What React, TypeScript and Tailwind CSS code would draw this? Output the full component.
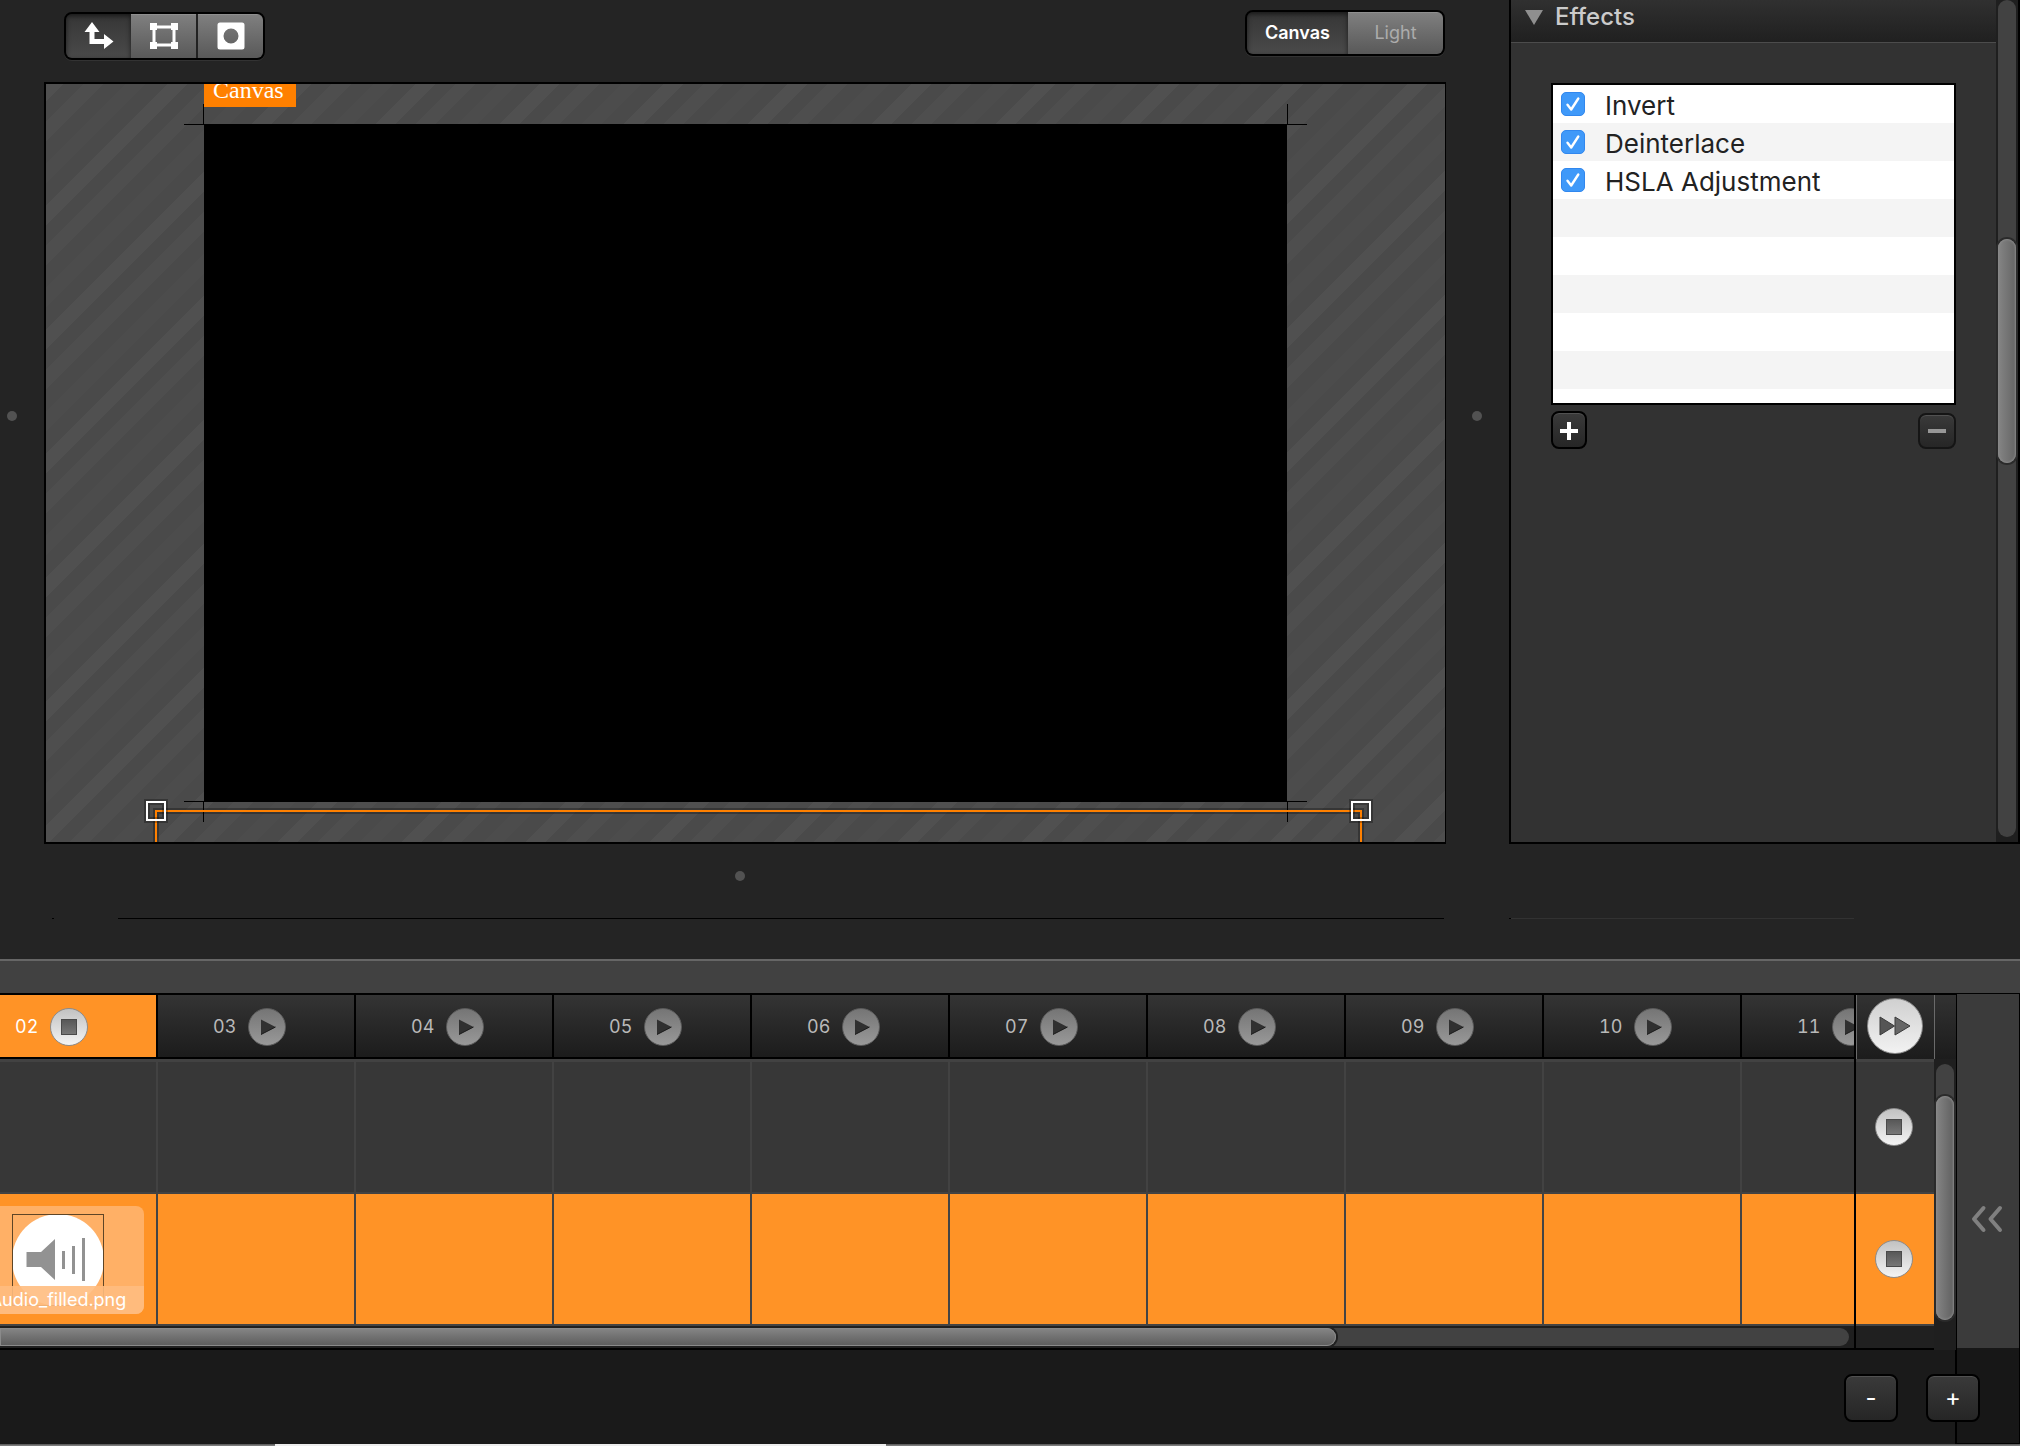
import { useState } from "react";
import type { ReactNode } from "react";

const effects = ["Invert", "Deinterlace", "HSLA Adjustment"];
const blankRows = ["r4", "r5", "r6", "r7", "r8", "r9"];
const columns = ["02", "03", "04", "05", "06", "07", "08", "09", "10", "11"];

const segBase = "flex items-center justify-center";
const segOn =
  "bg-linear-to-b from-[#363636] to-[#4a4a4a] shadow-[inset_0_2px_5px_rgba(0,0,0,0.6)]";
const segOff =
  "bg-linear-to-b from-[#808080] to-[#595959] shadow-[inset_0_1px_0_rgba(255,255,255,0.12)]";
const darkButton =
  "flex items-center justify-center border-2 bg-linear-to-b from-[#3a3a3a] to-[#262626] shadow-[inset_0_1px_0_rgba(255,255,255,0.12)]";

function MoveIcon() {
  return (
    <svg width="30" height="28" viewBox="0 0 30 28" fill="#fff" aria-hidden="true">
      <path d="M8 0 L15.500 10 H10.500 V17 H20 V12 L29.500 19.500 L20 27 V22 H5.500 V10 H0.500 Z" />
    </svg>
  );
}

function FrameIcon() {
  return (
    <svg width="28" height="26" viewBox="0 0 28 26" aria-hidden="true">
      <rect x="4" y="4" width="20" height="18" fill="none" stroke="#fff" strokeWidth="3" />
      <g fill="#fff">
        <rect x="0" y="0" width="7" height="7" />
        <rect x="21" y="0" width="7" height="7" />
        <rect x="0" y="19" width="7" height="7" />
        <rect x="21" y="19" width="7" height="7" />
      </g>
    </svg>
  );
}

function MaskIcon() {
  return (
    <svg width="28" height="28" viewBox="0 0 28 28" aria-hidden="true">
      <path
        fill="#fff"
        fillRule="evenodd"
        d="M3 0.500 H25 A2.500 2.500 0 0 1 27.500 3 V25 A2.500 2.500 0 0 1 25 27.500 H3 A2.500 2.500 0 0 1 0.500 25 V3 A2.500 2.500 0 0 1 3 0.500 Z M14 6.500 A7.500 7.500 0 1 0 14 21.500 A7.500 7.500 0 1 0 14 6.500 Z"
      />
    </svg>
  );
}

function StopButton({ label }: { label: string }) {
  return (
    <button
      aria-label={label}
      className="flex size-[38px] shrink-0 items-center justify-center rounded-full border border-[#8c8c8c] bg-linear-to-b from-[#c2c2c2] to-[#f4f4f4]"
    >
      <span className="size-4 border border-[#4a4a4a] bg-linear-to-b from-[#585858] to-[#777777]" />
    </button>
  );
}

function PlayButton({ label }: { label: string }) {
  return (
    <button
      aria-label={label}
      className="flex size-[38px] shrink-0 items-center justify-center rounded-full border border-[#5c5c5c] bg-linear-to-b from-[#757575] to-[#999999]"
    >
      <svg width="18" height="16" viewBox="0 0 18 16" aria-hidden="true">
        <path d="M3 0.500 L17.500 8 L3 15.500 Z" fill="#303030" />
        <path d="M3 15.500 L17.500 8" stroke="#1a1a1a" fill="none" />
      </svg>
    </button>
  );
}

function Dot() {
  return <span className="block size-2.5 shrink-0 rounded-full bg-[#525252]" />;
}

function Handle({ className }: { className: string }) {
  return (
    <span
      className={
        "absolute size-5 border-2 border-white shadow-[0_0_0_2px_rgba(0,0,0,0.28),inset_0_0_0_2px_rgba(0,0,0,0.28)] " +
        className
      }
    />
  );
}

function Stage() {
  return (
    <div className="relative min-h-80 flex-1 overflow-hidden border-2 border-r border-black bg-[repeating-linear-gradient(135deg,#505050_0%_7%,#4a4a4a_7%_15%,#4e4e4e_15%_23%,#4a4a4a_23%_32%,#4c4c4c_32%_40%,#4a4a4a_40%_49%,#505050_49%_50%)] bg-size-[124px_124px]">
      <div className="absolute inset-x-[158px] inset-y-10 bg-black">
        <span className="absolute -top-5 -left-px h-5 w-px bg-black" />
        <span className="absolute top-0 right-full h-px w-5 bg-black" />
        <span className="absolute -top-5 left-full h-5 w-px bg-black" />
        <span className="absolute top-0 left-full h-px w-5 bg-black" />
        <span className="absolute top-full -left-px h-5 w-px bg-black" />
        <span className="absolute right-full bottom-0 h-px w-5 bg-black" />
        <span className="absolute top-full left-full h-5 w-px bg-black" />
        <span className="absolute bottom-0 left-full h-px w-5 bg-black" />
      </div>
      <div className="absolute top-0 left-[158px] flex h-[23px] w-[92px] items-end bg-[#ff8000] pb-[5px] pl-[9px] font-['Liberation_Serif',serif] text-2xl leading-6 text-white">
        Canvas
      </div>
      <div className="absolute right-[83px] -bottom-2 left-[109px] h-10 border-2 border-[#ff8000] shadow-[0_0_0_2px_rgba(0,0,0,0.28),inset_0_0_0_2px_rgba(0,0,0,0.28)]">
        <Handle className="-top-[11px] -left-[11px]" />
        <Handle className="-top-[11px] -right-[11px]" />
      </div>
    </div>
  );
}

function Segmented({ children }: { children: ReactNode }) {
  return (
    <div className="flex overflow-hidden rounded-lg border-2 border-black bg-black shadow-[0_1px_0_#333]">
      {children}
    </div>
  );
}

function Toolbar() {
  const [tool, setTool] = useState(0);
  const [mode, setMode] = useState(0);
  const tools = [
    { name: "Move", icon: <MoveIcon /> },
    { name: "Transform", icon: <FrameIcon /> },
    { name: "Mask", icon: <MaskIcon /> },
  ];
  return (
    <div className="flex h-[82px] shrink-0 items-start justify-between pt-2.5 pr-px pl-5">
      <div className="pt-0.5">
        <Segmented>
          {tools.map((t, i) => (
            <button
              key={t.name}
              aria-label={t.name}
              aria-pressed={tool === i}
              onClick={() => setTool(i)}
              className={`${segBase} h-11 ${i === 2 ? "w-[67px] border-l-2 border-[#222]" : "w-[65px]"} ${tool === i ? segOn : segOff}`}
            >
              {t.icon}
            </button>
          ))}
        </Segmented>
      </div>
      <Segmented>
        {["Canvas", "Light"].map((m, i) => (
          <button
            key={m}
            aria-pressed={mode === i}
            onClick={() => setMode(i)}
            className={`${segBase} h-[42px] text-lg ${i === 0 ? "w-[101px]" : "w-[95px]"} ${mode === i ? "font-semibold text-white " + segOn : "text-[#acacac] " + segOff}`}
          >
            {m}
          </button>
        ))}
      </Segmented>
    </div>
  );
}

function EffectRow({ name, shaded }: { name: string; shaded: boolean }) {
  const [on, setOn] = useState(true);
  return (
    <li className={shaded ? "bg-[#f4f4f4]" : "bg-white"}>
      <label className="flex h-[38px] items-center gap-5 pl-2 text-[26px] text-[#222]">
        <span className="relative size-6 shrink-0">
          <input
            type="checkbox"
            checked={on}
            onChange={() => setOn(!on)}
            className="block size-6 appearance-none rounded-[5px] border border-[#3187ee] bg-[#3f99f9]"
          />
          {on && (
            <svg
              className="pointer-events-none absolute inset-0"
              width="24"
              height="24"
              viewBox="0 0 24 24"
              fill="none"
              stroke="#fff"
              strokeWidth="2.400"
              strokeLinecap="round"
              strokeLinejoin="round"
              aria-hidden="true"
            >
              <path d="M6.500 12.800 L10.200 17.500 L17.300 6.500" />
            </svg>
          )}
        </span>
        <span className="pt-1 leading-8">{name}</span>
      </label>
    </li>
  );
}

function Inspector() {
  return (
    <aside className="flex w-[511px] shrink-0 border-x-2 border-b-2 border-black bg-[#323232]">
      <div className="min-w-0 flex-1">
        <button className="flex h-[43px] w-full items-start gap-3 border-b border-[#4c4c4c] bg-linear-to-b from-[#303030] to-[#202020] pl-3.5 text-2xl leading-[34px] font-medium text-[#cbcbcb]">
          <svg className="mt-2.5" width="18" height="15" viewBox="0 0 18 15" aria-hidden="true">
            <path d="M0 0 H18 L9 15 Z" fill="#8f8f8f" />
          </svg>
          Effects
        </button>
        <div className="px-10 pt-10">
          <ul className="h-[322px] overflow-hidden border-2 border-black bg-white">
            {effects.map((name, i) => (
              <EffectRow key={name} name={name} shaded={i % 2 === 1} />
            ))}
            {blankRows.map((id, i) => (
              <li key={id} className={`h-[38px] ${i % 2 === 0 ? "bg-[#f4f4f4]" : "bg-white"}`} />
            ))}
          </ul>
          <div className="mt-1.5 flex items-end justify-between">
            <button
              aria-label="Add effect"
              className={`${darkButton} h-[38px] w-9 rounded-lg border-black pt-0.5`}
            >
              <svg width="18" height="18" viewBox="0 0 18 18" fill="#fff" aria-hidden="true">
                <path d="M7 0 H11 V7 H18 V11 H11 V18 H7 V11 H0 V7 H7 Z" />
              </svg>
            </button>
            <button
              aria-label="Remove effect"
              className={`${darkButton} h-9 w-[38px] rounded-lg border-[#151515]`}
            >
              <svg width="18" height="4" viewBox="0 0 18 4" aria-hidden="true">
                <rect width="18" height="4" fill="#979797" />
              </svg>
            </button>
          </div>
        </div>
      </div>
      <div className="w-[22px] shrink-0 bg-[#1f1f1f] px-0.5 pb-[5px]">
        <div className="h-full rounded-full bg-[#424242] pt-[239px]">
          <div className="h-[224px] rounded-full bg-linear-to-r from-[#858585] to-[#656565] shadow-[0_0_0_2px_#2b2b2b,inset_0_0_2px_1px_#8a8a8a]" />
        </div>
      </div>
    </aside>
  );
}

function AudioClip() {
  return (
    <div className="absolute inset-x-3 top-3 h-[108px] overflow-hidden rounded-lg bg-[#ffb066]">
      <svg className="absolute top-2 left-10" width="92" height="92" viewBox="0 0 92 92" aria-hidden="true">
        <circle cx="46" cy="46" r="46" fill="#fff" />
        <path d="M14.500 38 H29 L43 25 V66 L29 53 H14.500 Z" fill="#929292" />
        <g fill="#929292">
          <rect x="50" y="37" width="3" height="18" />
          <rect x="60" y="32" width="3" height="28" />
          <rect x="70" y="24" width="3" height="43" />
        </g>
        <rect x="0.500" y="0.500" width="91" height="91" fill="none" stroke="#5f4526" />
      </svg>
      <div className="absolute inset-x-0 bottom-0 h-7 bg-[#ffbd80]/90 text-center text-lg leading-7 text-white">
        Audio_filled.png
      </div>
    </div>
  );
}

function Tracks() {
  return (
    <div className="min-w-0 flex-1 overflow-hidden border-t-2 border-black bg-[#1f1f1f]">
      <div className="-ml-10 flex">
        {columns.map((n, i) => (
          <div key={n} className="w-[198px] shrink-0">
            <div
              className={`flex h-16 items-center border-r-2 border-b-2 border-black pt-0.5 pl-[55px] text-lg tabular-nums ${i === 0 ? "bg-[#ff9326] text-white" : "bg-linear-to-b from-[#343434] to-[#1c1c1c] text-[#b9b9b9]"}`}
            >
              <span className="w-[35px]">{n}</span>
              {i === 0 ? (
                <StopButton label={"Stop column " + n} />
              ) : (
                <PlayButton label={"Play column " + n} />
              )}
            </div>
            <div className="h-[135px] border-t-[3px] border-r-2 border-b-2 border-[#424242] bg-[#373737]" />
            <div className="relative h-[132px] border-r-2 border-b-2 border-[#444] bg-[#ff9326]">
              {i === 0 && <AudioClip />}
            </div>
          </div>
        ))}
      </div>
      <div className="border-b-2 border-black py-0.5 pr-[5px]">
        <div className="h-[18px] rounded-r-full bg-[#424242]">
          <div className="h-full w-[calc(72%+5px)] rounded-r-full bg-linear-to-b from-[#868686] to-[#5c5c5c] shadow-[0_0_0_2px_#202020,inset_0_0_0_1px_#8a8a8a]" />
        </div>
      </div>
    </div>
  );
}

function RowControls() {
  return (
    <div className="flex w-20 shrink-0 flex-col border-t-2 border-l-2 border-black bg-[#202020]">
      <div className="flex h-16 items-center justify-center border-l border-[#6a6a6a] bg-linear-to-b from-[#323232] to-[#1c1c1c] pr-0.5 pb-0.5">
        <button
          aria-label="Next column"
          className="flex size-14 items-center justify-center rounded-full border border-[#8a8a8a] bg-linear-to-b from-[#d0d0d0] to-[#f2f2f2]"
        >
          <svg width="32" height="20" viewBox="0 0 32 20" aria-hidden="true">
            <path d="M1 1 L15.500 10 L1 19 Z" fill="#555" stroke="#3a3a3a" />
            <path d="M16 1 L31 10 L16 19 Z" fill="#666" stroke="#3a3a3a" />
          </svg>
        </button>
      </div>
      <div className="flex h-[135px] items-center justify-center border-t-[3px] border-b-2 border-[#424242] bg-[#373737] pr-0.5">
        <StopButton label="Stop row 1" />
      </div>
      <div className="flex h-[132px] items-center justify-center border-b-2 border-[#444] bg-[#ff9326] pr-0.5">
        <StopButton label="Stop row 2" />
      </div>
      <div className="flex-1 border-b-2 border-black" />
    </div>
  );
}

function RowScrollbar() {
  return (
    <div className="w-[22px] shrink-0 border-t-2 border-black bg-[#1f1f1f]">
      <div className="h-16 border-l border-[#6a6a6a] bg-linear-to-b from-[#323232] to-[#1c1c1c]" />
      <div className="mx-0.5 mt-[5px] h-64 rounded-full bg-[#424242] pt-8">
        <div className="h-full rounded-full bg-linear-to-r from-[#858585] to-[#606060] shadow-[0_0_0_2px_#2b2b2b,inset_0_0_2px_1px_#8a8a8a]" />
      </div>
    </div>
  );
}

function Timeline() {
  return (
    <section className="shrink-0 border-t-2 border-[#666]">
      <div className="h-8 bg-[#414141]" />
      <div className="flex">
        <Tracks />
        <RowControls />
        <RowScrollbar />
        <div className="w-16 shrink-0 border-x border-t border-black bg-[#171717] pb-0.5">
          <button
            aria-label="Expand panel"
            className="flex h-full w-full items-center justify-center bg-[#3b3b3b] pt-24 pr-0.5"
          >
            <svg
              width="32"
              height="28"
              viewBox="0 0 32 28"
              fill="none"
              stroke="#808080"
              strokeWidth="4"
              strokeLinecap="round"
              strokeLinejoin="round"
              aria-hidden="true"
            >
              <path d="M12.500 3 L3 14 L12.500 25 M29 3 L19.500 14 L29 25" />
            </svg>
          </button>
        </div>
      </div>
      <div className="relative flex h-[94px] items-center justify-end gap-7 bg-[#1a1a1a] pt-0.5 pr-10">
        <span className="absolute inset-y-0 right-0 w-[65px] border-r border-b border-l-2 border-black bg-[#171717]" />
        <button className={`${darkButton} relative h-12 w-[54px] rounded-lg border-black text-2xl text-white`}>
          -
        </button>
        <button className={`${darkButton} relative h-12 w-[54px] rounded-lg border-black text-2xl text-white`}>
          +
        </button>
      </div>
      <div className="h-0.5 bg-linear-to-b from-[#555] to-[#8a8a8a] pl-[275px]">
        <div className="h-full w-[35%] bg-[#eeeeee]" />
      </div>
    </section>
  );
}

export default function App() {
  return (
    <div className="flex min-h-screen flex-col overflow-hidden bg-[#242424] font-[Inter,'Liberation_Sans',sans-serif]">
      <main className="flex flex-1">
        <div className="flex w-11 shrink-0 items-center pb-3 pl-[7px]">
          <Dot />
        </div>
        <div className="flex min-w-0 flex-1 flex-col">
          <Toolbar />
          <Stage />
        </div>
        <div className="flex w-[63px] shrink-0 items-center justify-center pr-0.5 pb-3">
          <Dot />
        </div>
        <Inspector />
      </main>
      <div className="flex h-[115px] shrink-0 pl-11">
        <div className="flex flex-1 flex-col items-center justify-between pb-10">
          <div className="mt-[27px] pr-2">
            <Dot />
          </div>
          <div className="flex h-px w-full pl-2">
            <span className="w-0.5 bg-black" />
            <span className="ml-16 flex-1 bg-black" />
          </div>
        </div>
        <div className="flex w-[576px] shrink-0 flex-col justify-end pr-[166px] pb-10 pl-[65px]">
          <div className="h-px border-l-2 border-black bg-[#323232]" />
        </div>
      </div>
      <Timeline />
    </div>
  );
}
